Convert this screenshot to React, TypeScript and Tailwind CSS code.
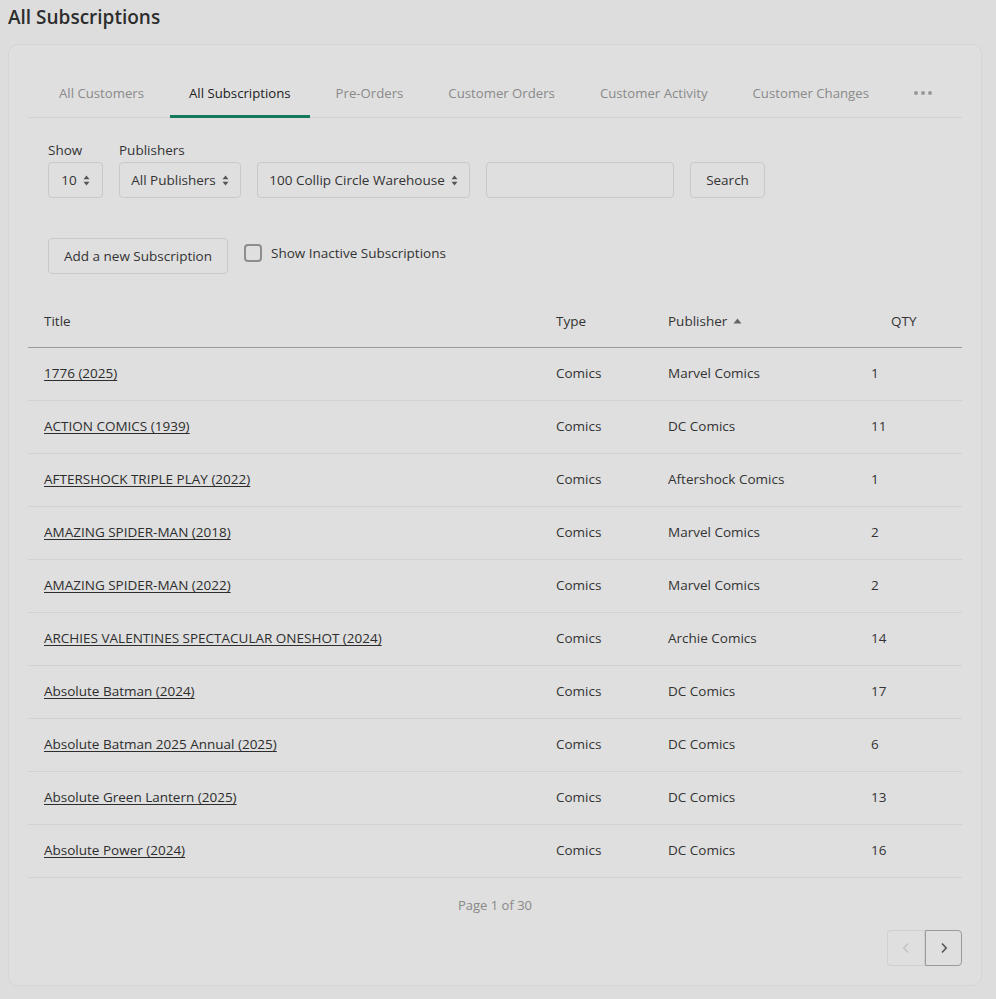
import React from 'react';

// rows for the subscriptions table
const rows = [
  { title: '1776 (2025)', type: 'Comics', publisher: 'Marvel Comics', qty: 1 },
  { title: 'ACTION COMICS (1939)', type: 'Comics', publisher: 'DC Comics', qty: 11 },
  { title: 'AFTERSHOCK TRIPLE PLAY (2022)', type: 'Comics', publisher: 'Aftershock Comics', qty: 1 },
  { title: 'AMAZING SPIDER-MAN (2018)', type: 'Comics', publisher: 'Marvel Comics', qty: 2 },
  { title: 'AMAZING SPIDER-MAN (2022)', type: 'Comics', publisher: 'Marvel Comics', qty: 2 },
  { title: 'ARCHIES VALENTINES SPECTACULAR ONESHOT (2024)', type: 'Comics', publisher: 'Archie Comics', qty: 14 },
  { title: 'Absolute Batman (2024)', type: 'Comics', publisher: 'DC Comics', qty: 17 },
  { title: 'Absolute Batman 2025 Annual (2025)', type: 'Comics', publisher: 'DC Comics', qty: 6 },
  { title: 'Absolute Green Lantern (2025)', type: 'Comics', publisher: 'DC Comics', qty: 13 },
  { title: 'Absolute Power (2024)', type: 'Comics', publisher: 'DC Comics', qty: 16 },
];

const tabs = [
  'All Customers',
  'All Subscriptions',
  'Pre-Orders',
  'Customer Orders',
  'Customer Activity',
  'Customer Changes',
];

const SortArrows = () => (
  <svg width="7" height="11" viewBox="0 0 7 11" className="ml-[6px] text-[#555] shrink-0">
    <path d="M3.5 0.5 L6.5 4.2 L0.5 4.2 Z" fill="currentColor" />
    <path d="M3.5 10.5 L6.5 6.8 L0.5 6.8 Z" fill="currentColor" />
  </svg>
);

const Select = ({ label, className }: { label: string; className?: string }) => (
  <div
    className={`h-9 flex items-center justify-center whitespace-nowrap border border-[#c9c9c9] rounded-[4px] text-[13.5px] text-[#333] ${className ?? ''}`}
  >
    {label}
    <SortArrows />
  </div>
);

export default function App() {
  return (
    <div
      className="min-h-[999px] bg-[#dddddd] px-2 pb-[14px] text-[#333] text-[13.5px] whitespace-nowrap"
      style={{ fontFamily: '"Open Sans", "Noto Sans", sans-serif' }}
    >
      {/* Titre */}
      <h1 className="h-[44px] pt-[4px] text-[19px] font-semibold text-[#2d2d2d] leading-[26px]">
        All Subscriptions
      </h1>

      <div className="w-[974px] bg-[#dfdfdf] border border-[#d5d5d5] rounded-[10px] px-[19px] pt-[38px] pb-[19px]">
        {/* Onglets */}
        <div className="flex items-end gap-[7px] pl-3 border-b border-[#d2d2d2]">
          {tabs.map((t) => (
            <div
              key={t}
              className={`px-[19px] pb-[12px] text-[13.2px] leading-[20px] border-b-[3px] -mb-px ${
                t === 'All Subscriptions'
                  ? 'border-[#127a5a] text-[#222]'
                  : 'border-transparent text-[#8a8a8a]'
              }`}
            >
              {t}
            </div>
          ))}
          <div className="px-[19px] pb-[15px] -mb-px h-[35px] flex items-center gap-[3px]">
            <span className="w-[4px] h-[4px] rounded-full bg-[#999]" />
            <span className="w-[4px] h-[4px] rounded-full bg-[#999]" />
            <span className="w-[4px] h-[4px] rounded-full bg-[#999]" />
          </div>
        </div>

        {/* Filtres */}
        <div className="flex items-end gap-4 pl-5 mt-[22px]">
          <div className="flex flex-col">
            <span className="leading-[20px] mb-[2px]">Show</span>
            <Select label="10" className="w-[55px]" />
          </div>
          <div className="flex flex-col">
            <span className="leading-[20px] mb-[2px]">Publishers</span>
            <Select label="All Publishers" className="w-[122px]" />
          </div>
          <Select label="100 Collip Circle Warehouse" className="w-[213px]" />
          <input className="w-[188px] h-9 border border-[#c9c9c9] rounded-[4px] bg-transparent" />
          <button className="w-[75px] h-9 border border-[#c9c9c9] rounded-[4px] text-[#333]">
            Search
          </button>
        </div>

        <div className="flex items-start gap-4 pl-5 mt-[40px]">
          <button className="w-[180px] h-9 border border-[#c9c9c9] rounded-[4px] text-[#333]">
            Add a new Subscription
          </button>
          <label className="flex items-center gap-[9px] pt-[5px] leading-[20px]">
            <span className="w-[18px] h-[18px] border-2 border-[#8d8d8d] rounded-[4px]" />
            Show Inactive Subscriptions
          </label>
        </div>

        {/* Tableau */}
        <table className="w-full mt-[22px] border-collapse">
          <thead>
            <tr className="h-[51px] border-b border-[#9c9c9c] text-left">
              <th className="font-normal pl-4 w-[512px]">Title</th>
              <th className="font-normal pl-4 w-[112px]">Type</th>
              <th className="font-normal pl-4 w-[203px]">
                <span className="inline-flex items-center gap-[6px]">
                  Publisher
                  <svg width="9" height="6" viewBox="0 0 9 6">
                    <path d="M4.5 0.5 L8.5 5.5 L0.5 5.5 Z" fill="#666" />
                  </svg>
                </span>
              </th>
              <th className="font-normal pl-9">QTY</th>
            </tr>
          </thead>
          <tbody>
            {rows.map((r) => (
              <tr key={r.title} className="h-[53px] border-b border-[#d2d2d2]">
                <td className="pl-4">
                  <a className="underline underline-offset-2 text-[#2d2d2d]">{r.title}</a>
                </td>
                <td className="pl-4">{r.type}</td>
                <td className="pl-4">{r.publisher}</td>
                <td className="pl-4">{r.qty}</td>
              </tr>
            ))}
          </tbody>
        </table>

        {/* Pagination */}
        <div className="text-center text-[13px] text-[#888] mt-[17px] leading-[20px]">Page 1 of 30</div>
        <div className="flex justify-end mt-[15px]">
          <button className="w-[38px] h-9 border border-[#d0d0d0] rounded-l-[4px] flex items-center justify-center text-[#c4c4c4]">
            <svg width="8" height="12" viewBox="0 0 8 12">
              <path d="M6 1.5 L1.8 6 L6 10.5" stroke="currentColor" strokeWidth="1.6" fill="none" />
            </svg>
          </button>
          <button className="w-[37px] h-9 border border-[#9a9a9a] rounded-r-[4px] flex items-center justify-center text-[#555]">
            <svg width="8" height="12" viewBox="0 0 8 12">
              <path d="M2 1.5 L6.2 6 L2 10.5" stroke="currentColor" strokeWidth="1.6" fill="none" />
            </svg>
          </button>
        </div>
      </div>
    </div>
  );
}
